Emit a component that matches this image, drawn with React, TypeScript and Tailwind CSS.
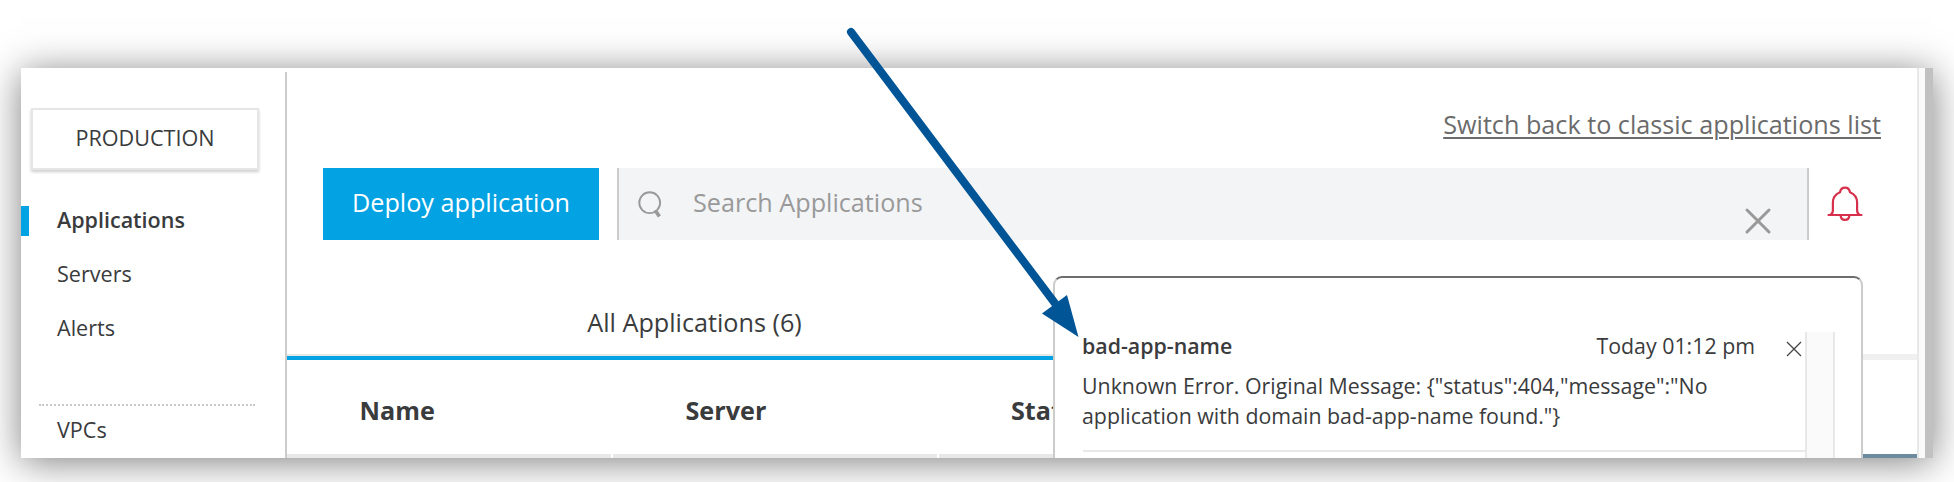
const navItems = [
  { label: "Applications", active: true },
  { label: "Servers", active: false },
  { label: "Alerts", active: false },
];

function SearchIcon() {
  return (
    <svg className="ml-[18px] mt-[22px] h-[28px] w-[26px] shrink-0" viewBox="0 0 26 28" fill="none" stroke="#999999">
      <circle cx="12.7" cy="12.7" r="10.4" strokeWidth="1.9" />
      <path d="M17.500 20.800l2.500 2" strokeWidth="2" />
      <path d="M19.200 21.700l3.200 4.900" strokeWidth="3.6" />
    </svg>
  );
}

function BellIcon() {
  return (
    <svg className="ml-[18px] mt-[18px] h-[38px] w-[36px] shrink-0" viewBox="0 0 36 38" fill="none" stroke="#d6304c" strokeWidth="2.2" strokeLinecap="round" strokeLinejoin="round">
      <path d="M1.500 29H34.500" />
      <path d="M3.600 28.700C5.600 27.600 5.900 26.200 5.900 24.300V16.500C5.900 11.500 8.800 8 13 6.200C13.600 3.200 15.400 1.700 18 1.700S22.400 3.200 23 6.200C27.200 8 30.100 11.500 30.100 16.500V24.300C30.100 26.200 30.400 27.600 32.400 28.700" />
      <path d="M13.600 29.400C13.800 32.300 15.500 33.900 18 33.900S22.200 32.300 22.400 29.400" />
    </svg>
  );
}

function Sidebar() {
  return (
    <aside className="flex w-[264px] shrink-0 flex-col text-[21.6px] leading-[30px]">
      <div className="ml-[10px] mt-10 flex h-[62px] w-[228px] items-center justify-center border-2 border-[#e6e6e6] pb-[2px] shadow-[0_2px_3px_rgba(0,0,0,0.2)]">
        PRODUCTION
      </div>
      <nav className="mt-[36px] flex flex-col gap-6">
        {navItems.map((item) => (
          <div key={item.label} className="flex h-[30px]">
            <span className={item.active ? "h-[30px] w-2 bg-[#03a2e3]" : "h-[30px] w-2"} />
            <span className={item.active ? "-mt-px pl-7 text-[21.5px] font-semibold" : "-mt-px pl-7"}>
              {item.label}
            </span>
          </div>
        ))}
      </nav>
      <div className="ml-[18px] mt-[60px] w-[216px] border-t-2 border-dotted border-[#c8c8c8]" />
      <span className="mt-[9px] pl-9">VPCs</span>
    </aside>
  );
}

function Notification() {
  return (
    <section className="absolute left-[1032px] top-[208px] flex h-[190px] w-[810px] flex-col rounded-[9px] border-2 border-[#cccccc] border-t-[#6d6d6e] bg-white pl-[27px] pt-[54px] text-[21.35px] leading-[30px]">
      <div className="flex">
        <div className="w-[723px] shrink-0">
          <div className="flex h-[30px] pr-[3px]">
            <span className="-mt-px font-semibold">bad-app-name</span>
            <span className="-mt-px ml-auto">Today 01:12 pm</span>
            <svg className="ml-[31px] mt-[9px] size-4" viewBox="0 0 16 16" stroke="#444" strokeWidth="1.3">
              <path d="M1 1l14 14M15 1L1 15" />
            </svg>
          </div>
          <p className="mt-[9px] w-[690px]">
            Unknown Error. Original Message: {'{"status":404,"message":"No application with domain bad-app-name found."}'}
          </p>
          <div className="ml-px mt-[19px] h-[2px] bg-[#e8e8e8]" />
        </div>
        <div className="h-[140px] w-[30px] border-x-2 border-[#e8e8e8] bg-[#fafafa]" />
      </div>
    </section>
  );
}

function Main() {
  return (
    <main className="mt-1 flex w-[1632px] shrink-0 flex-col border-l-2 border-[#cccccc] text-[25.2px] leading-[34px]">
      <div className="flex h-24 justify-end pr-9 pt-[35px]">
        <a className="text-[#6b6b6b] underline decoration-2 underline-offset-[3px]">
          Switch back to classic applications list
        </a>
      </div>
      <div className="flex h-[72px] pl-9">
        <button className="w-[276px] shrink-0 bg-[#03a2e3] pb-[4px] text-white">Deploy application</button>
        <div className="ml-[18px] flex w-[1192px] shrink-0 border-x-2 border-[#cccccc] bg-[#f3f4f6]">
          <SearchIcon />
          <span className="ml-[30px] mt-[17px] text-[#999999]">Search Applications</span>
          <svg className="ml-auto mr-[35px] mt-[39px] h-[28px] w-[28px]" viewBox="0 0 28 28" stroke="#999999" strokeWidth="3" strokeLinecap="round">
            <path d="M3 3l22 22M25 3l-22 22" />
          </svg>
        </div>
        <BellIcon />
      </div>
      <div className="flex h-[120px]">
        <div className="flex w-[815px] flex-col items-center pt-[65px]">
          <span>All Applications (6)</span>
          <div className="mt-[15px] h-[2px] w-full bg-[#e6e8e8]" />
          <div className="h-1 w-full bg-[#03a2e3]" />
        </div>
        <div className="mt-[114px] h-[6px] grow bg-[#f0f0f0]" />
      </div>
      <div className="flex h-[94px] pt-[33px] font-bold">
        <span className="w-[326px] pl-[72.500px]">Name</span>
        <span className="w-[326px] pl-[72.500px]">Server</span>
        <span className="w-[326px] pl-[72px]">Status</span>
      </div>
      <div className="flex h-1 gap-[2px]">
        <div className="w-[324px] bg-[#e6e8ea]" />
        <div className="w-[324px] bg-[#e6e8ea]" />
        <div className="w-[324px] bg-[#e6e8ea]" />
        <div className="grow bg-[#6c8b9c]" />
      </div>
    </main>
  );
}

export default function App() {
  return (
    <div className="relative flex h-[482px] w-[1954px] overflow-hidden bg-white pl-[21px] pt-[68px] font-['Open_Sans',sans-serif] text-[#3a3b3d]">
      <div className="h-[390px] w-[1912px] shadow-[0_4px_36px_rgba(0,0,0,0.5)]">
        <div className="relative flex h-[390px] w-[1912px] overflow-hidden bg-white">
          <Sidebar />
          <Main />
          <div className="w-2 shrink-0 border-l-2 border-[#e8e8e8] bg-[#fafafa]" />
          <div className="w-2 shrink-0 bg-[#c1c1c1]" />
          <Notification />
        </div>
      </div>
      <svg className="absolute left-0 top-0 h-[482px] w-[1954px]" viewBox="0 0 1954 482">
        <path d="M851 32L1057 306" stroke="#005596" strokeWidth="8" strokeLinecap="round" />
        <path d="M1078.500 337L1042 313.500L1067 295Z" fill="#005596" />
      </svg>
    </div>
  );
}
